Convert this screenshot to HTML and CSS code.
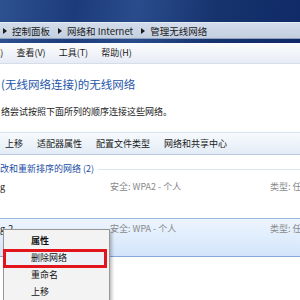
FILE: index.html
```html
<!DOCTYPE html>
<html lang="zh-CN">
<head>
    <meta charset="UTF-8">
    <title>管理无线网络</title>
    <link rel="stylesheet" href="styles.css">
</head>
<body>
    <div class="ventana">
        <div class="marco">
            <div class="direccion">
                <span class="flecha primera"></span>
                <span>控制面板</span>
                <span class="flecha"></span>
                <span>网络和 Internet</span>
                <span class="flecha"></span>
                <span>管理无线网络</span>
            </div>
        </div>

        <div class="menu">
            <span class="cortado">编辑(E)</span>
            <span>查看(V)</span>
            <span>工具(T)</span>
            <span>帮助(H)</span>
        </div>

        <div class="cabecera">
            <h1>(无线网络连接)的无线网络</h1>
            <p>络尝试按照下面所列的顺序连接这些网络。</p>
        </div>

        <div class="barra">
            <span>上移</span>
            <span>适配器属性</span>
            <span>配置文件类型</span>
            <span>网络和共享中心</span>
        </div>

        <div class="grupo">
            <h2>改和重新排序的网络 (2)</h2>
        </div>

        <div class="fila">
            <span class="nombre">g</span>
            <span class="dato">安全: WPA2 - 个人</span>
            <span class="dato">类型: 任何受支持</span>
        </div>
        <div class="fila activa">
            <span class="nombre">g-2</span>
            <span class="dato">安全: WPA - 个人</span>
            <span class="dato">类型: 任何受支持</span>
        </div>

        <!-- menu contextual -->
        <ul class="contexto">
            <li class="defecto">属性</li>
            <li class="marcado">删除网络</li>
            <li>重命名</li>
            <li>上移</li>
        </ul>
    </div>
</body>
</html>
```

FILE: styles.css
```css
body {
    margin: 0;
    padding: 0;
    background-color: #fff;
    font-family: "Noto Sans CJK SC", "Liberation Sans", sans-serif;
    font-size: 9px;
    color: #1a1a1a;
}

.ventana {
    position: relative;
    width: 300px;
    height: 300px;
    overflow: hidden;
    background-color: #fff;
}

.marco {
    padding: 22px 0 4px;
    background: linear-gradient(100deg, #2e5190 0%, #1c3b7a 25%, #2a4c8c 45%, #17346f 70%, #0f2a66 100%);
}

.direccion {
    display: flex;
    align-items: center;
    height: 17px;
    background: linear-gradient(#d3dcea, #c3cfe0);
    border-top: 1px solid #e6ecf4;
    border-bottom: 1px solid #8da0bd;
    box-sizing: border-box;
    font-size: 9.5px;
    white-space: nowrap;
}

.flecha {
    width: 0;
    height: 0;
    border-left: 4px solid #1a1a1a;
    border-top: 3px solid transparent;
    border-bottom: 3px solid transparent;
    margin: 0 5px 0 8px;
}

.flecha.primera {
    margin-left: 3px;
}

.menu {
    display: flex;
    gap: 13px;
    height: 20px;
    line-height: 20px;
    margin-left: -26px;
    background: linear-gradient(#fdfdfe, #e6ebf5);
    border-bottom: 1px solid #d6dce8;
    white-space: nowrap;
}

.cabecera {
    padding: 12px 0 0 1px;
    height: 56px;
}

.cabecera h1 {
    margin: 0;
    font-size: 11.5px;
    font-weight: normal;
    line-height: 16px;
    color: #1f56a8;
    white-space: nowrap;
}

.cabecera p {
    margin: 14px 0 0;
    line-height: 12px;
    white-space: nowrap;
}

.barra {
    display: flex;
    gap: 14px;
    height: 23px;
    line-height: 21px;
    padding-left: 5px;
    box-sizing: border-box;
    background: linear-gradient(#f7fafd, #e3ecf6);
    border-top: 1px solid #d9e3ef;
    border-bottom: 1px solid #b9c9dc;
    white-space: nowrap;
}

.grupo {
    padding-top: 8px;
    height: 12px;
}

.grupo h2 {
    display: flex;
    align-items: center;
    margin: 0;
    font-size: 9px;
    font-weight: normal;
    line-height: 12px;
    color: #1c4fa6;
    white-space: nowrap;
}

.grupo h2::after {
    content: "";
    flex: 1;
    margin-left: 4px;
    border-top: 1px solid #dfe6ef;
}

.fila {
    display: grid;
    grid-template-columns: 110px 160px 100px;
    height: 43px;
    padding-top: 6px;
    box-sizing: border-box;
    line-height: 12px;
    white-space: nowrap;
}

.fila .dato {
    color: #8a8a8a;
}

.fila.activa {
    height: 39px;
    padding-top: 4px;
    background: linear-gradient(#edf5fe, #d3e5fb);
    border-top: 1px solid #98b8e0;
    border-bottom: 1px solid #84a9d8;
}

.contexto {
    position: absolute;
    left: 3px;
    top: 229px;
    width: 107px;
    height: 80px;
    margin: 0;
    padding: 2px 0 0;
    list-style: none;
    box-sizing: border-box;
    background-color: #f3f3f3;
    border: 1px solid #979797;
    box-shadow: 2px 2px 3px rgba(0, 0, 0, 0.25);
}

.contexto li {
    position: relative;
    height: 17px;
    line-height: 17px;
    padding-left: 27px;
    color: #111;
}

.contexto li.defecto {
    font-weight: bold;
}

.contexto li.marcado {
    background-color: #eef2f8;
    margin-right: 2px;
}

.contexto li.marcado::after {
    content: "";
    position: absolute;
    left: -1px;
    right: 0;
    top: 0;
    bottom: -2px;
    border: 3px solid #e2141c;
}
```
